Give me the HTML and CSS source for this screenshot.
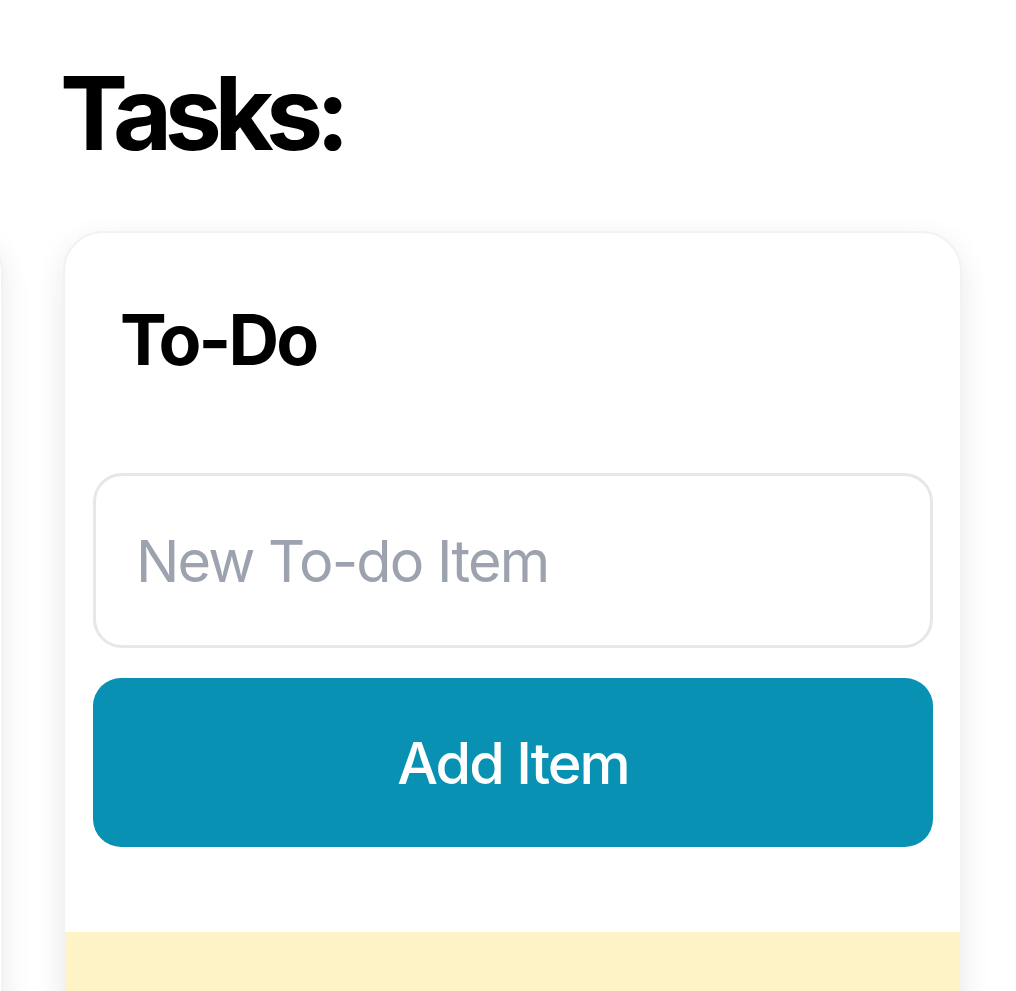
FILE: index.html
```html
<!DOCTYPE html>
<html lang="en">
<head>
<meta charset="utf-8">
<title>Tasks</title>
<link rel="stylesheet" href="styles.css">
</head>
<body>
  <main class="page">
    <h1 class="page-title">Tasks:</h1>
    <div class="board">
      <section class="column column-prev" aria-hidden="true"></section>
      <section class="column">
        <header class="column-head"><h2 class="column-title">To-Do</h2></header>
        <div class="column-form">
          <input class="item-input" type="text" placeholder="New To-do Item">
          <button class="add-btn" type="button">Add Item</button>
        </div>
        <div class="column-list"></div>
      </section>
    </div>
  </main>
</body>
</html>
```

FILE: styles.css
```css
* { box-sizing: border-box; }

html, body {
  margin: 0;
  padding: 0;
  background: #ffffff;
  overflow: hidden;
}

body {
  font-family: Inter, "Noto Sans", "Liberation Sans", sans-serif;
  color: #000000;
}

.page {
  padding-top: 62px;
}

.page-title {
  margin: 0 0 67px 60px;
  font-size: 102px;
  line-height: 102px;
  font-weight: 700;
  letter-spacing: -7.5px;
}

.board {
  display: flex;
  gap: 60px;
  margin-left: -896px;
  align-items: flex-start;
}

.column {
  flex: 0 0 899px;
  width: 899px;
  background: #ffffff;
  border: 2px solid #f1f2f4;
  border-radius: 40px;
  box-shadow: 0 10px 30px rgba(0, 0, 0, 0.09);
  overflow: hidden;
}

.column-prev {
  height: 1200px;
}

.column-head {
  padding: 57px 55px 83px 55px;
}

.column-title {
  margin: 0;
  font-size: 70px;
  line-height: 100px;
  font-weight: 700;
  letter-spacing: -2.8px;
}

.column-form {
  display: flex;
  flex-direction: column;
  gap: 30px;
  padding: 0 27px 0 28px;
}

.item-input {
  display: block;
  width: 100%;
  height: 175px;
  border: 3px solid #e5e7eb;
  border-radius: 29px;
  padding: 0 40px;
  font-family: inherit;
  font-size: 57.6px;
  letter-spacing: -1.8px;
  color: #111827;
  background: #ffffff;
  outline: none;
}

.item-input::placeholder {
  color: #9ca3af;
}

.add-btn {
  display: block;
  width: 100%;
  height: 169px;
  border: none;
  border-radius: 28px;
  background: #0891b2;
  color: #ffffff;
  font-family: inherit;
  font-size: 57.6px;
  font-weight: 500;
  letter-spacing: -2px;
}

.column-list {
  margin-top: 85px;
  height: 400px;
  background: #fef3c7;
}
```
